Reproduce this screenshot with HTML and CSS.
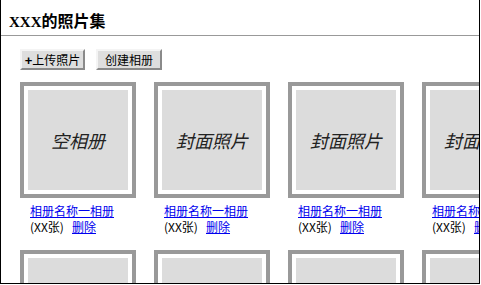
FILE: index.html
```html
<!DOCTYPE html>
<html lang="zh">
<head>
<meta charset="utf-8">
<title>XXX的照片集</title>
<link rel="stylesheet" href="styles.css">
</head>
<body>
<div class="page">
  <div class="header"><span class="latin">XXX</span>的照片集</div>
  <div class="toolbar">
    <button class="btn btn-upload"><b class="plus">+</b>上传照片</button>
    <button class="btn btn-create">创建相册</button>
  </div>
  <div class="albums">
    <div class="album">
      <div class="frame"><div class="cover">空相册</div></div>
      <div class="caption"><a href="#">相册名称一相册</a><br><span class="count">(XX张)</span><a href="#">删除</a></div>
    </div>
    <div class="album">
      <div class="frame"><div class="cover">封面照片</div></div>
      <div class="caption"><a href="#">相册名称一相册</a><br><span class="count">(XX张)</span><a href="#">删除</a></div>
    </div>
    <div class="album">
      <div class="frame"><div class="cover">封面照片</div></div>
      <div class="caption"><a href="#">相册名称一相册</a><br><span class="count">(XX张)</span><a href="#">删除</a></div>
    </div>
    <div class="album">
      <div class="frame"><div class="cover">封面照片</div></div>
      <div class="caption"><a href="#">相册名称一相册</a><br><span class="count">(XX张)</span><a href="#">删除</a></div>
    </div>
    <div class="album">
      <div class="frame"><div class="cover"></div></div>
    </div>
    <div class="album">
      <div class="frame"><div class="cover"></div></div>
    </div>
    <div class="album">
      <div class="frame"><div class="cover"></div></div>
    </div>
    <div class="album">
      <div class="frame"><div class="cover"></div></div>
    </div>
  </div>
</div>
</body>
</html>
```
FILE: styles.css
```css
html, body {
  margin: 0;
  padding: 0;
  background: #fff;
}
body {
  font-family: "Noto Sans CJK SC", "Liberation Sans", sans-serif;
  color: #000;
}
.page {
  width: 480px;
  height: 284px;
  box-sizing: border-box;
  border: 1px solid #000;
  border-top: 0;
  overflow: hidden;
}
.header {
  height: 20px;
  padding: 10px 8px 5px;
  font-size: 16px;
  line-height: 20px;
  font-weight: bold;
  border-bottom: 1px solid #999;
  overflow: hidden;
}
.latin {
  font-family: "Liberation Serif", serif;
  font-size: 15px;
  line-height: 1;
}
.toolbar {
  display: flex;
  gap: 11px;
  padding-left: 19px;
  margin-top: 13px;
}
.btn {
  height: 21px;
  padding: 0;
  font-family: "Noto Sans CJK SC", sans-serif;
  font-size: 12px;
  line-height: 17px;
  color: #000;
  background: #dedede;
  border: 2px solid;
  border-color: #f4f4f4 #8a8a8a #8a8a8a #f4f4f4;
  box-sizing: border-box;
}
.plus {
  font-family: "Liberation Sans", sans-serif;
  font-weight: bold;
  font-size: 13px;
}
.btn-upload { width: 65px; }
.btn-create { width: 66px; }
.albums {
  display: grid;
  grid-template-columns: repeat(4, 116px);
  column-gap: 18px;
  row-gap: 15px;
  padding-left: 19px;
  margin-top: 12px;
}
.frame {
  border: 4px solid #999;
  padding: 4px;
  background: #fff;
  width: 100px;
}
.cover {
  width: 100px;
  height: 100px;
  background: #dcdcdc;
  display: flex;
  align-items: center;
  justify-content: center;
  font-size: 18px;
  font-style: italic;
  color: #222;
}
.caption {
  margin-top: 5px;
  padding-left: 10px;
  font-size: 12px;
  line-height: 16px;
  white-space: nowrap;
}
.caption a {
  color: #0000ee;
  text-decoration: underline;
}
.count {
  display: inline-block;
  width: 42px;
}
```
